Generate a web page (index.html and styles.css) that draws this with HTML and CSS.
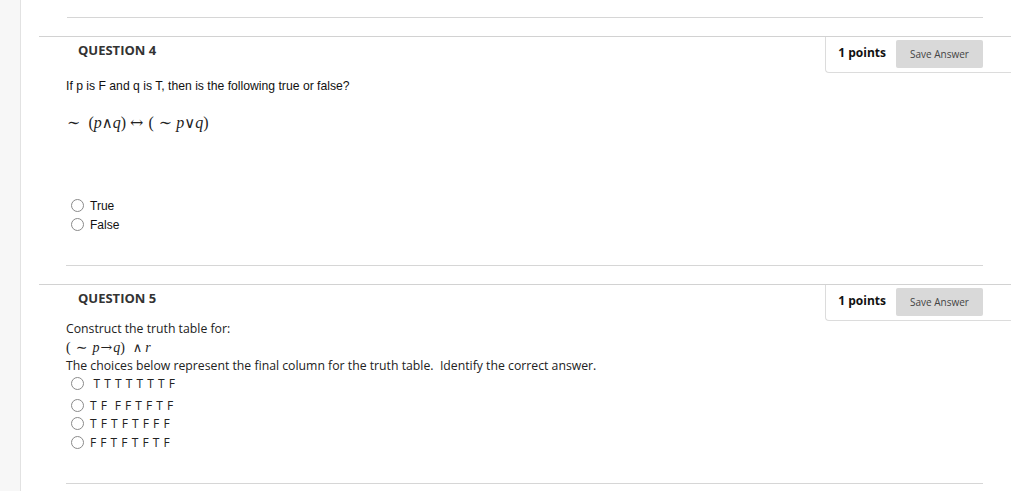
FILE: index.html
```html
<!DOCTYPE html>
<html>
<head>
<meta charset="utf-8">
<link rel="stylesheet" href="styles.css">
</head>
<body>
<div class="page">
  <aside class="sidebar"></aside>
  <main class="content">
    <div class="prev-end"><hr class="sep"></div>

    <section class="question">
      <div class="points-box">
        <span class="points">1 points</span>
        <button class="save">Save Answer</button>
      </div>
      <h2 class="qtitle">QUESTION 4</h2>
      <div class="qbody">
        <p class="qtext-arial">If p is F and q is T, then is the following true or false?</p>
        <p class="formula f4"><span class="op tl">∼</span>(<i>p</i><span class="op">∧</span><i>q</i>)<span class="op arr">↔</span>(<span class="op tl2">∼</span><i>p</i><span class="op">∨</span><i>q</i>)</p>
        <ul class="choices arial">
          <li><span class="radio"></span>True</li>
          <li><span class="radio"></span>False</li>
        </ul>
        <hr class="sep">
      </div>
    </section>

    <section class="question">
      <div class="points-box">
        <span class="points">1 points</span>
        <button class="save">Save Answer</button>
      </div>
      <h2 class="qtitle">QUESTION 5</h2>
      <div class="qbody q5">
        <p class="qtext-open">Construct the truth table for:</p>
        <p class="formula f5">(<span class="op tl2">∼</span><i>p</i><span class="op arr5">→</span><i>q</i>)<span class="op and5">∧</span><i>r</i></p>
        <p class="qtext-open">The choices below represent the final column for the truth table.&nbsp; Identify the correct answer.</p>
        <ul class="choices open">
          <li class="first"><span class="radio"></span>&nbsp;T T T T T T T F</li>
          <li><span class="radio"></span>T F&nbsp; F F T F T F</li>
          <li><span class="radio"></span>T F T F T F F F</li>
          <li><span class="radio"></span>F F T F T F T F</li>
        </ul>
        <hr class="sep last">
      </div>
    </section>
  </main>
</div>
</body>
</html>
```

FILE: styles.css
```css
html, body {
  margin: 0;
  padding: 0;
  background: #ffffff;
}

body {
  font-family: "Open Sans", "Liberation Sans", sans-serif;
  color: #222222;
  height: 491px;
  overflow: hidden;
}

.page {
  display: flex;
  min-height: 491px;
}

.sidebar {
  width: 20px;
  flex: none;
  background: #f7f7f7;
  border-right: 1px solid #e2e2e2;
}

.content {
  margin-left: 18px;
  width: 972px;
  flex: none;
}

.prev-end {
  padding: 17px 28px 0 28px;
  height: 36px;
  box-sizing: border-box;
}

.sep {
  border: 0;
  border-top: 1px solid #d6d6d6;
  margin: 0;
  height: 0;
}

.question {
  border-top: 1px solid #d2d2d2;
}

.points-box {
  float: right;
  display: flex;
  align-items: center;
  height: 36px;
  box-sizing: border-box;
  padding: 3px 28px 4px 12px;
  border-left: 1px solid #dcdcdc;
  border-bottom: 1px solid #dcdcdc;
  border-bottom-left-radius: 4px;
  gap: 10px;
}

.points {
  font-weight: 700;
  font-size: 12px;
  line-height: 16px;
  margin-top: -2px;
  color: #111111;
}

.save {
  font-family: "Open Sans", sans-serif;
  font-size: 10px;
  color: #444444;
  background: #d9d9d9;
  border: 0;
  border-radius: 2px;
  width: 87px;
  height: 28px;
  padding: 0;
}

.qtitle {
  margin: 0;
  padding: 3px 0 0 39px;
  font-size: 13px;
  line-height: 20px;
  font-weight: 700;
  color: #333333;
}

.qbody {
  padding: 0 28px 0 27px;
}

.qtext-arial {
  font-family: "Liberation Sans", Arial, sans-serif;
  font-size: 12.2px;
  line-height: 16px;
  margin: 18px 0 0 0;
  color: #111111;
}

.formula {
  font-family: "Liberation Serif", "DejaVu Serif", serif;
  color: #222222;
  margin: 0;
  white-space: nowrap;
}

.formula i {
  font-style: italic;
}

.op {
  font-family: "DejaVu Serif", serif;
  font-style: normal;
  padding: 0 1px;
}

.f4 {
  font-size: 16px;
  line-height: 20px;
  margin-top: 19px;
}

.f4 .op {
  font-size: 15px;
  padding: 0;
}

.f4 .tl {
  font-size: 16px;
  padding: 0 0 0 1px;
  margin-right: 8px;
}

.f4 .tl2 {
  font-size: 16px;
  margin: 0 4px 0 5px;
}

.f4 .arr {
  font-size: 16px;
  margin: 0 5px 0 4px;
}

.choices {
  list-style: none;
  margin: 0;
  padding: 0;
}

.choices li {
  display: flex;
  align-items: center;
  height: 19px;
}

.radio {
  width: 11px;
  height: 11px;
  border: 1px solid #8a8a8a;
  border-radius: 50%;
  margin: 0 6px 0 5px;
  flex: none;
  box-sizing: content-box;
}

.choices.arial {
  font-family: "Liberation Sans", Arial, sans-serif;
  font-size: 12px;
  color: #111111;
  margin-top: 63px;
}

.qbody > .sep {
  margin-top: 31px;
  margin-bottom: 18px;
}

.q5 .qtext-open {
  font-size: 12.25px;
  line-height: 18px;
  margin: 0;
  color: #222222;
}

.q5 .qtext-open:first-child {
  margin-top: 12px;
}

.f5 {
  font-size: 14px;
  line-height: 19px;
}

.f5 .tl2 {
  font-size: 14px;
  margin: 0 4px 0 4px;
}

.f5 .arr5 {
  font-size: 14px;
  padding: 0 1px;
}

.f5 .and5 {
  font-size: 13px;
  margin: 0 2px 0 7px;
}

.choices.open {
  font-size: 12px;
  letter-spacing: 0.5px;
  color: #222222;
}

.choices.open li.first {
  height: 17px;
  margin-bottom: 4px;
}

.choices.open li:not(.first) {
  height: 18.5px;
}

.qbody > .sep.last {
  margin-top: 31px;
}
```
